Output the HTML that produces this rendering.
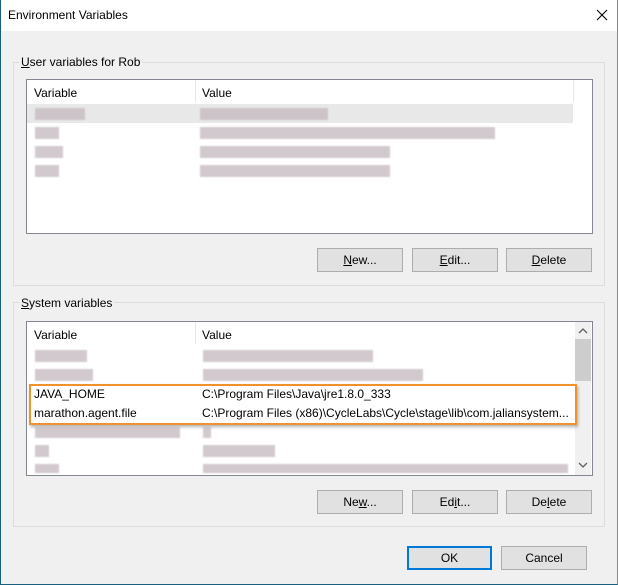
<!DOCTYPE html>
<html><head><style>
*{margin:0;padding:0;box-sizing:border-box}
body{width:618px;height:585px;overflow:hidden;background:#f0f0f0;font-family:"Liberation Sans",sans-serif;font-size:12px;color:#000;position:relative}
.a{position:absolute}
.win{left:0;top:0;width:618px;height:585px;border-left:1px solid #1b5f7f;border-bottom:1px solid #1b5f7f;border-right:1px solid #888}
.title{left:1px;top:0;width:616px;height:31px;background:#fff}
.grp{border:1px solid #dcdcdc}
.lbl{background:#f0f0f0;padding:0 2px}
.list{background:#fff;border:1px solid #828790}
.btn{background:#e1e1e1;border:1px solid #adadad;text-align:center;line-height:22px}
.blur{background:#c6bcc2;filter:blur(0.8px);height:12px;margin-top:-2px;opacity:.8}
u{text-decoration:underline}
</style></head><body>
<div class="a win"></div>
<div class="a title"></div>
<div class="a" style="left:8px;top:8px;font-size:12px">Environment Variables</div>
<svg class="a" style="left:596px;top:9px" width="12" height="12"><path d="M1 1L11 11M11 1L1 11" stroke="#000" stroke-width="1.1"/></svg>

<div class="a grp" style="left:13px;top:62px;width:592px;height:224px"></div>
<div class="a lbl" style="left:19px;top:55px"><u>U</u>ser variables for Rob</div>
<div class="a list" style="left:26px;top:79px;width:567px;height:155px"></div>
<div class="a" style="left:195px;top:80px;width:1px;height:22px;background:#e5e5e5"></div>
<div class="a" style="left:573px;top:80px;width:1px;height:22px;background:#e5e5e5"></div>
<div class="a" style="left:34px;top:86px">Variable</div>
<div class="a" style="left:202px;top:86px">Value</div>
<div class="a" style="left:27px;top:104px;width:546px;height:19px;background:#e8e8e8"></div>
<div class="a blur" style="left:35px;top:110px;width:50px"></div>
<div class="a blur" style="left:200px;top:110px;width:128px"></div>
<div class="a blur" style="left:35px;top:129px;width:24px"></div>
<div class="a blur" style="left:200px;top:129px;width:295px"></div>
<div class="a blur" style="left:35px;top:148px;width:28px"></div>
<div class="a blur" style="left:200px;top:148px;width:190px"></div>
<div class="a blur" style="left:35px;top:167px;width:24px"></div>
<div class="a blur" style="left:200px;top:167px;width:190px"></div>
<div class="a btn" style="left:317px;top:248px;width:86px;height:24px"><u>N</u>ew...</div>
<div class="a btn" style="left:412px;top:248px;width:86px;height:24px"><u>E</u>dit...</div>
<div class="a btn" style="left:506px;top:248px;width:86px;height:24px"><u>D</u>elete</div>

<div class="a grp" style="left:13px;top:302px;width:592px;height:225px"></div>
<div class="a lbl" style="left:19px;top:296px"><u>S</u>ystem variables</div>
<div class="a list" style="left:26px;top:321px;width:567px;height:155px"></div>
<div class="a" style="left:195px;top:322px;width:1px;height:22px;background:#e5e5e5"></div>
<div class="a" style="left:34px;top:328px">Variable</div>
<div class="a" style="left:202px;top:328px">Value</div>
<div class="a" style="left:575px;top:322px;width:16px;height:153px;background:#f0f0f0"></div>
<div class="a" style="left:575px;top:339px;width:16px;height:42px;background:#cdcdcd"></div>
<svg class="a" style="left:578px;top:327px" width="10" height="8"><path d="M1 6L5 2L9 6" stroke="#606060" stroke-width="1.3" fill="none"/></svg>
<svg class="a" style="left:578px;top:461px" width="10" height="8"><path d="M1 2L5 6L9 2" stroke="#606060" stroke-width="1.3" fill="none"/></svg>
<div class="a blur" style="left:35px;top:352px;width:52px"></div>
<div class="a blur" style="left:203px;top:352px;width:170px"></div>
<div class="a blur" style="left:35px;top:371px;width:58px"></div>
<div class="a blur" style="left:203px;top:371px;width:220px"></div>
<div class="a" style="left:29px;top:384px;width:548px;height:41px;border:2px solid #f0922c;box-shadow:1px 2px 3px rgba(0,0,0,.3)"></div>
<div class="a" style="left:34px;top:387px">JAVA_HOME</div>
<div class="a" style="left:202px;top:387px">C:\Program Files\Java\jre1.8.0_333</div>
<div class="a" style="left:34px;top:406px">marathon.agent.file</div>
<div class="a" style="left:202px;top:406px">C:\Program Files (x86)\CycleLabs\Cycle\stage\lib\com.jaliansystem...</div>
<div class="a blur" style="left:35px;top:428px;width:145px"></div>
<div class="a blur" style="left:203px;top:428px;width:8px"></div>
<div class="a blur" style="left:35px;top:447px;width:14px"></div>
<div class="a blur" style="left:203px;top:447px;width:72px"></div>
<div class="a blur" style="left:35px;top:466px;width:24px;height:9px"></div>
<div class="a blur" style="left:203px;top:466px;width:365px;height:9px"></div>
<div class="a btn" style="left:317px;top:490px;width:86px;height:24px">Ne<u>w</u>...</div>
<div class="a btn" style="left:412px;top:490px;width:86px;height:24px">Ed<u>i</u>t...</div>
<div class="a btn" style="left:506px;top:490px;width:86px;height:24px">De<u>l</u>ete</div>

<div class="a btn" style="left:407px;top:546px;width:85px;height:24px;border:2px solid #0078d7;line-height:20px">OK</div>
<div class="a btn" style="left:501px;top:546px;width:86px;height:24px">Cancel</div>
</body></html>
